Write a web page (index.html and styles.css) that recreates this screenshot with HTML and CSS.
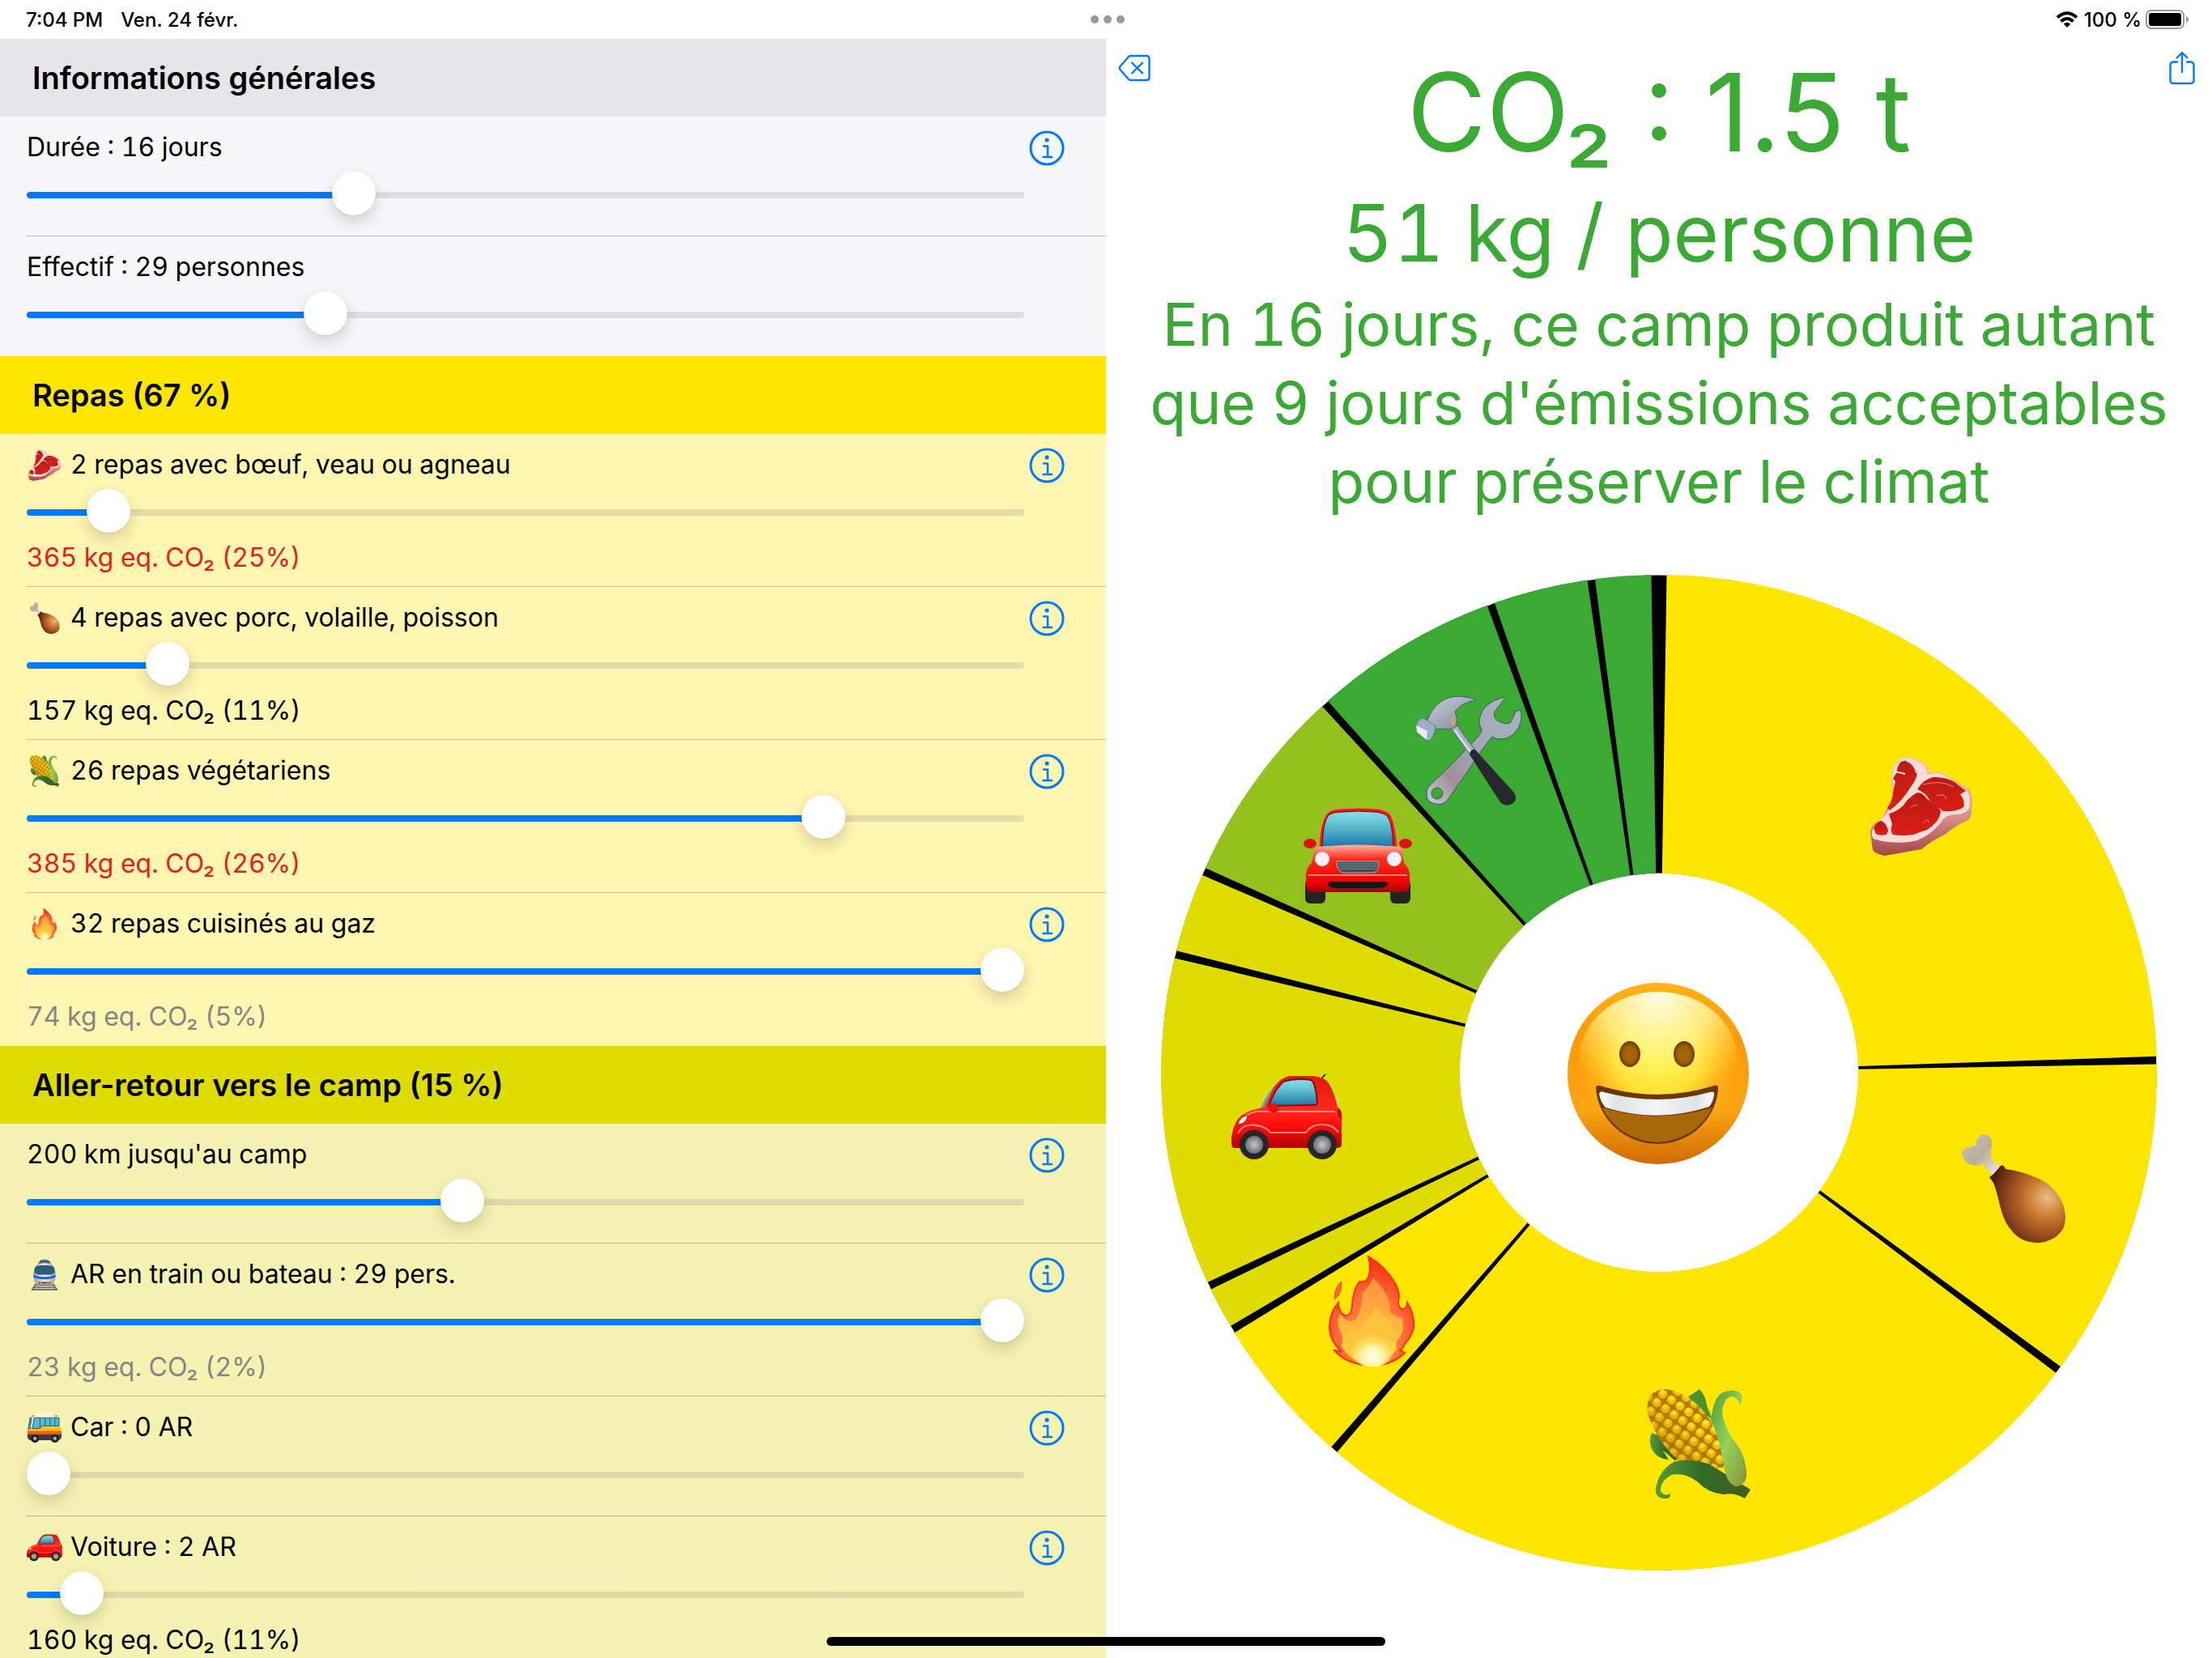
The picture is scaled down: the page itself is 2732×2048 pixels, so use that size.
FILE: index.html
```html
<!DOCTYPE html>
<html lang="fr">
<head>
<meta charset="utf-8">
<meta name="viewport" content="width=device-width, initial-scale=1">
<title>Bilan carbone du camp</title>
<link rel="stylesheet" href="styles.css">
</head>
<body>
<svg class="sprite" aria-hidden="true">
  <defs>
    <linearGradient id="g-bone" x1="0" y1="0" x2="1" y2="1"><stop offset="0" stop-color="#cfc6b8"/><stop offset=".5" stop-color="#b9ad9c"/><stop offset="1" stop-color="#f1ece0"/></linearGradient>
    <radialGradient id="g-leg" cx=".76" cy=".42" r=".75"><stop offset="0" stop-color="#e8bd83"/><stop offset=".35" stop-color="#c9792f"/><stop offset=".7" stop-color="#8f451c"/><stop offset="1" stop-color="#4d1c0c"/></radialGradient>
    <linearGradient id="g-rim" x1="0" y1="0" x2="0" y2="1"><stop offset="0" stop-color="#f6c9c6"/><stop offset=".6" stop-color="#d9908f"/><stop offset="1" stop-color="#a34744"/></linearGradient>
    <linearGradient id="g-red" x1="0" y1="0" x2="0" y2="1"><stop offset="0" stop-color="#b91a10"/><stop offset="1" stop-color="#dc1f16"/></linearGradient>
    <linearGradient id="g-leaf" x1="0" y1="0" x2="1" y2="1"><stop offset="0" stop-color="#4f9a3a"/><stop offset=".5" stop-color="#93d35a"/><stop offset="1" stop-color="#86913a"/></linearGradient>
    <linearGradient id="g-leaf2" x1="0" y1="0" x2="1" y2="0"><stop offset="0" stop-color="#5a9a3c"/><stop offset=".5" stop-color="#2f6b25"/><stop offset="1" stop-color="#475b22"/></linearGradient>
    <pattern id="p-kernel" width="13" height="13" patternUnits="userSpaceOnUse" patternTransform="rotate(35)"><rect width="13" height="13" fill="#b07a00"/><rect x="1" y="1" width="11" height="11" rx="5" fill="#f2bf00"/><circle cx="5" cy="5" r="3" fill="#ffe23c"/></pattern>
    <linearGradient id="g-cobshade" x1="1" y1="0" x2="0" y2="1"><stop offset=".4" stop-color="#a86b00" stop-opacity="0"/><stop offset="1" stop-color="#a86b00" stop-opacity=".6"/></linearGradient>
    <radialGradient id="g-fire" cx=".5" cy=".75" r=".72"><stop offset="0" stop-color="#ffa63a"/><stop offset=".55" stop-color="#ff6a3a"/><stop offset="1" stop-color="#f52e12"/></radialGradient>
    <linearGradient id="g-fire2" x1="0" y1="0" x2="0" y2="1"><stop offset="0" stop-color="#ff9240"/><stop offset=".6" stop-color="#ffb93c"/><stop offset="1" stop-color="#ffdf3a"/></linearGradient>
    <radialGradient id="g-fire3" cx=".5" cy=".75" r=".6"><stop offset="0" stop-color="#fffde8"/><stop offset=".4" stop-color="#fff5a8"/><stop offset="1" stop-color="#ffdd30" stop-opacity="0"/></radialGradient>
    <linearGradient id="g-car" x1="0" y1="0" x2="0" y2="1"><stop offset="0" stop-color="#e4170e"/><stop offset=".45" stop-color="#ff2a1c"/><stop offset=".7" stop-color="#ff0d0d"/><stop offset="1" stop-color="#b30000"/></linearGradient>
    <linearGradient id="g-glass" x1="0" y1="0" x2="0" y2="1"><stop offset="0" stop-color="#86e2e8"/><stop offset=".5" stop-color="#56b4cb"/><stop offset="1" stop-color="#1c76a6"/></linearGradient>
    <radialGradient id="g-hub"><stop offset="0" stop-color="#c6c8cc"/><stop offset="1" stop-color="#6c6e73"/></radialGradient>
    <linearGradient id="g-hood" x1="0" y1="0" x2="0" y2="1"><stop offset="0" stop-color="#ffb5a6"/><stop offset=".3" stop-color="#ff2a1c"/><stop offset=".8" stop-color="#f00000"/><stop offset="1" stop-color="#9e0000"/></linearGradient>
    <linearGradient id="g-steel" x1="0" y1="0" x2="1" y2="1"><stop offset="0" stop-color="#c3cedb"/><stop offset=".5" stop-color="#a3acba"/><stop offset="1" stop-color="#7d7a88"/></linearGradient>
    <linearGradient id="g-steel2" x1="1" y1="0" x2="0" y2="1"><stop offset="0" stop-color="#a9b4c2"/><stop offset=".5" stop-color="#a0a6b4"/><stop offset=".75" stop-color="#a08f99"/><stop offset="1" stop-color="#c2d0dc"/></linearGradient>
    <linearGradient id="g-face" x1="0" y1="0" x2="0" y2="1"><stop offset="0" stop-color="#ffb31a"/><stop offset=".3" stop-color="#ff9a0a"/><stop offset=".7" stop-color="#fca512"/><stop offset="1" stop-color="#cf6a04"/></linearGradient>
    <radialGradient id="g-glow" cx=".5" cy=".42" r=".5"><stop offset="0" stop-color="#fff44a"/><stop offset=".5" stop-color="#ffdc30"/><stop offset="1" stop-color="#ffb81c" stop-opacity="0"/></radialGradient>
    <radialGradient id="g-shine" cx=".5" cy=".04" r=".7"><stop offset="0" stop-color="#fffde6"/><stop offset=".5" stop-color="#fff89a" stop-opacity=".75"/><stop offset="1" stop-color="#fff04a" stop-opacity="0"/></radialGradient>
    <radialGradient id="g-eye"><stop offset="0" stop-color="#a9690a"/><stop offset=".6" stop-color="#a06208"/><stop offset="1" stop-color="#6b3703"/></radialGradient>
    <linearGradient id="g-teeth" x1="0" y1="0" x2="1" y2="0"><stop offset="0" stop-color="#fff"/><stop offset=".15" stop-color="#dfe2e5"/><stop offset=".5" stop-color="#f4f5f7"/><stop offset=".85" stop-color="#dfe2e5"/><stop offset="1" stop-color="#fff"/></linearGradient>
    <linearGradient id="g-train" x1="0" y1="0" x2="1" y2="0"><stop offset="0" stop-color="#9aa1ad"/><stop offset=".5" stop-color="#e9edf2"/><stop offset="1" stop-color="#9aa1ad"/></linearGradient>
  </defs>

  <symbol id="meat" viewBox="0 0 126 122">
    <path fill="url(#g-rim)" d="M27 19Q30 9 34 5 40 0 46 0L58 3 70 11 73 20 84 18Q98 24 107 31L122 40Q127 50 125 62 126 74 121 78 106 84 92 96 78 102 63 114L18 122Q6 120 3 115L0 93Q1 85 7 81 17 75 20 65 27 56 28 42 24 28 27 19Z"/>
    <path fill="#fbdcd8" d="M28 19Q31 9 36 5 41 1 46 2L57 5 67 12 71 22 84 20Q97 25 107 33L120 42Q125 52 122 64 117 70 108 71 92 71 88 80 74 97 58 103 40 108 14 104L4 101Q0 96 3 89 7 82 12 77 20 72 23 64 29 53 30 42 26 28 28 19Z"/>
    <path fill="url(#g-red)" d="M32 20Q34 9 38 6L45 4Q53 8 58 18 58 26 50 37 39 55 24 66L21 63Q28 53 28 44L31 30 28 27Z"/>
    <path fill="none" stroke="#fbdcd8" stroke-width="2" d="M44 4Q56 9 57 20M31 18l12 3"/>
    <path fill="url(#g-red)" d="M23 70Q38 66 45 54 52 47 58 44 65 44 70 52 82 58 87 67 86 80 70 90 60 93 53 96 40 98 28 96 24 92 27 83Z"/>
    <path fill="url(#g-red)" d="M58 40Q66 27 78 25 92 24 104 31L118 42 111 46Q118 56 115 62 108 68 90 67 82 62 74 54Q68 44 58 40Z"/>
    <path fill="none" stroke="#e88" stroke-width="1" d="M65 34q22-6 38 3M82 48q9-4 12 4M50 62q5-4 8-2M65 82q4-6 8-2"/>
    <path fill="url(#g-red)" d="M4 88Q8 79 14 79 20 82 22 91L20 96Q12 98 7 95Z"/>
  </symbol>

  <symbol id="leg" viewBox="0 0 128 134">
    <path fill="url(#g-bone)" d="M0 24Q1 17 8 16L17 14Q17 3 27 0 37 1 37 11 37 21 35 27L47 41 38 51 26 37Q20 40 12 38 2 35 0 24Z"/>
    <path fill="url(#g-leg)" d="M34 53Q39 50 42 46L47 40Q51 36 54 43 75 46 93 54 113 62 123 82 131 99 126 115 119 130 97 134 76 135 64 122 52 110 47 88 43 70 39 60Z"/>
  </symbol>

  <symbol id="corn" viewBox="0 0 128 136">
    <path fill="url(#g-leaf2)" d="M6 54Q1 66 8 77 14 86 27 87L20 76Q26 80 34 88L42 85 22 60Z"/>
    <path fill="#4b9131" d="M51 9Q58 5 65 0 73 8 74 20L81 38Q63 24 51 9Z"/>
    <path fill="url(#p-kernel)" d="M1 30Q-1 9 8 4 20-3 34 2 60 12 77 36 92 64 96 96 62 104 39 88 12 64 1 30Z"/>
    <path fill="url(#g-cobshade)" d="M1 30Q-1 9 8 4 20-3 34 2 60 12 77 36 92 64 96 96 62 104 39 88 12 64 1 30Z"/>
    <path fill="url(#g-leaf2)" d="M29 129Q30 136 21 135 10 134 11 123 15 99 35 89 56 85 78 93L128 124 121 135Q108 127 95 130 75 128 62 114 46 102 30 106 16 114 17 126 22 133 29 129Z"/>
    <path fill="url(#g-leaf)" d="M79 38Q82 12 92 5 104-1 113 3 121 8 115 20 112 8 103 9 94 13 93 30 97 50 108 64 124 84 123 109 119 121 109 120 98 115 95 95 91 62 79 38Z"/>
  </symbol>

  <symbol id="fire" viewBox="0 0 107 137">
    <path fill="#ff6a3a" stroke="#f03a1a" d="M16 32Q7 40 7 54 16 48 16 32Z"/>
    <path fill="url(#g-fire)" stroke="#f53214" stroke-width="2" d="M49 1Q70 13 82 34 89 47 86 57 86 66 92 66 97 65 97 58 106 72 105 88 104 98 94 109 92 115 88 117L94 120Q78 136 51 136 22 134 7 117L15 118Q0 103 1 86 2 70 12 58 12 70 20 74 28 75 29 62 30 42 38 32 45 34 49 27 53 16 49 1Z"/>
    <path fill="url(#g-fire2)" d="M55 28Q76 46 76 70 86 78 90 76 96 92 84 106L84 116Q68 134 51 135 28 132 16 112 20 102 12 88 10 78 14 72 26 88 36 76 42 60 42 46 48 40 55 28Z"/>
    <path fill="#ffc23c" d="M60 64Q72 82 78 80 84 100 74 116 62 134 52 135 32 130 24 112 20 98 26 92 40 94 46 80Z"/>
    <ellipse cx="54" cy="112" rx="28" ry="26" fill="url(#g-fire3)"/>
  </symbol>

  <symbol id="car" viewBox="0 0 137 107">
    <path stroke="#333" stroke-width="2" fill="none" d="M111 9Q112 4 116 1"/>
    <path fill="#4fa9bf" d="M36 43Q44 24 56 12L60 20 46 43ZM120 12Q129 25 131 42L122 30Z"/>
    <path fill="url(#g-car)" d="M0 78Q3 60 12 52 24 44 40 42L52 18Q60 5 72 3L100 3Q116 5 120 12 127 25 131 42 138 44 136 60V88Q136 92 130 92H4Q0 92 0 86Z"/>
    <path fill="url(#g-glass)" stroke="#8c0b08" stroke-width="2" d="M46 40Q53 20 64 10 80 5 98 8 104 11 106 36 106 39 102 39Z"/>
    <path fill="none" stroke="#ff8d80" stroke-width="2" d="M14 56Q22 45 42 47H128M8 74q6-13 22-10 14 2 18 9h44q6-10 20-10t20 10"/>
    <path fill="#fff" stroke="#a33" d="M8 63Q10 53 20 52 18 62 8 63Z"/>
    <rect x="46" y="37" width="12" height="11" rx="4" fill="#e3140d"/>
    <path fill="#a50c0c" d="M131 42q6 4 4 14-4-2-4-14Z"/>
    <circle cx="28" cy="88" r="18" fill="#262628"/><circle cx="28" cy="88" r="11" fill="url(#g-hub)"/>
    <circle cx="112" cy="88" r="18" fill="#262628"/><circle cx="112" cy="88" r="11" fill="url(#g-hub)"/>
  </symbol>

  <symbol id="carfront" viewBox="0 0 134 118">
    <rect x="2" y="88" width="25" height="30" rx="6" fill="#232325"/>
    <rect x="107" y="88" width="25" height="30" rx="6" fill="#232325"/>
    <path fill="#ee1c10" stroke="#ff7e68" d="M19 50Q20 20 28 8 34 1 46 1 67-1 90 1 102 2 108 9 114 22 116 50Z"/>
    <path fill="url(#g-glass)" stroke="#5b0b08" d="M23 48Q24 16 31 9 36 5 48 5 67 3 88 5 100 6 104 11 110 20 111 48Z"/>
    <ellipse cx="8" cy="44" rx="8" ry="6" fill="#e01010"/><ellipse cx="126" cy="44" rx="8" ry="6" fill="#e01010"/>
    <path fill="url(#g-hood)" d="M14 50Q18 47 30 47 67 44 105 47 118 47 121 50L124 68Q131 74 131 84V98Q130 104 122 104H12Q4 104 3 98V84Q3 74 10 68Z"/>
    <path fill="none" stroke="#ff8474" stroke-width="2" d="M6 83H128"/>
    <circle cx="23" cy="63" r="9" fill="#f2f2f4" stroke="#c99"/><circle cx="112" cy="63" r="9" fill="#f2f2f4" stroke="#c99"/>
    <path fill="#40525d" stroke="#a9b1b8" d="M41 66H93Q93 80 86 80H48Q41 78 41 66Z"/>
    <path stroke="#82929c" fill="none" d="M43 69H91M43 72H91M45 75H89"/>
    <path fill="#151517" d="M34 91H100Q106 91 103 95 100 99 94 99H40Q34 99 31 95 29 91 34 91Z"/>
  </symbol>

  <symbol id="tools" viewBox="0 0 132 136">
    <path fill="url(#g-steel2)" stroke="#4b4f58" fill-rule="evenodd" d="M107 3Q112 1 109 6L98 20Q95 29 105 33 112 36 117 34 121 28 124 20 130 16 131 22 132 35 124 45 116 54 105 54 99 54 95 51 82 66 64 95L39 130Q33 136 25 134 14 132 14 123 13 117 17 112L42 88 74 55Q82 47 82 42 77 34 80 27 82 17 89 12 97 5 107 3ZM20 121A7 7 0 0 0 34 121 7 7 0 0 0 20 121Z"/>
    <path fill="#aab2c1" stroke="#5a5f6b" d="M44 41L52 37Q61 52 73 66L67 73Q57 58 44 41Z"/>
    <path fill="none" stroke="#dfe7ee" stroke-width="2" d="M49 43Q58 57 68 69"/>
    <path fill="#26292c" d="M67 73Q69 65 74 67L122 120Q127 128 121 133 112 139 105 132Z"/>
    <path fill="url(#g-steel)" stroke="#4f5866" d="M17 26Q22 14 34 6 48-1 62 2 72 3 75 6 58 8 49 20 54 32 50 38 45 44 34 41L27 42 14 32Z"/>
    <path fill="#c9a084" d="M45 22Q52 30 48 38L43 35Q46 29 45 22Z"/>
    <path fill="#9fb0c6" stroke="#66758a" d="M1 37Q4 28 10 28L25 38Q23 54 16 56L2 45Z"/>
    <path fill="#e6eef6" d="M1 37L15 44 14 55 2 45Z"/>
  </symbol>

  <symbol id="smile" viewBox="0 0 224 224">
    <circle cx="112" cy="112" r="112" fill="url(#g-face)"/>
    <ellipse cx="112" cy="110" rx="102" ry="100" fill="url(#g-glow)"/>
    <ellipse cx="112" cy="96" rx="98" ry="85" fill="url(#g-shine)"/>
    <ellipse cx="77" cy="88" rx="13" ry="16" fill="url(#g-eye)"/><ellipse cx="144" cy="88" rx="13" ry="16" fill="url(#g-eye)"/>
    <path fill="#6b3703" d="M35 131Q35 126 40 127 111 149 181 127 187 125 186 133 183 163 157 184 136 199 111 199 86 199 65 184 38 163 35 131Z"/>
    <path fill="#a56708" d="M43 154Q111 175 179 154 170 172 153 184 134 196 111 197 88 196 69 184 51 172 43 154Z"/>
    <path fill="url(#g-teeth)" d="M39 137Q40 133 45 135 111 153 176 135 182 133 181 138 180 147 175 153 111 174 47 154 41 148 39 137Z"/>
  </symbol>

  <symbol id="train" viewBox="0 0 34 41">
    <path stroke="#77726f" stroke-width="2" fill="none" d="M6 32L1 40M28 32L33 40M4 34H30M2 37H32M0 40H34"/>
    <path fill="#2f5f80" stroke="#9aa1ad" d="M9 6Q10 1 17 1T25 6Z"/>
    <path fill="url(#g-train)" stroke="#8f97a4" d="M3 20Q3 5 17 5T31 20Q31 32 24 33H10Q3 32 3 20Z"/>
    <path fill="#29607f" stroke="#1d3c52" d="M5 12Q6 9 17 9T29 12V18Q28 20 17 20T5 18Z"/>
    <path fill="none" stroke="#1660e0" stroke-width="3" d="M3 22Q7 25 17 25T31 22"/>
    <path stroke="#d22" stroke-width="2" d="M9 31H12M22 31H25"/><path stroke="#444" stroke-width="2" d="M13 31H21"/>
  </symbol>

  <symbol id="bus" viewBox="0 0 41 38">
    <path fill="#fff6d8" d="M10 2Q11 1 14 1H28Q30 1 31 3H38Q39 4 40 18H0Q1 6 3 4 4 3 9 3Z"/>
    <path fill="#ffc400" d="M7 18H40V24H0V20Z"/>
    <path fill="#ff5f1a" d="M0 23H41V28H0Z"/>
    <path fill="#3c3c40" d="M0 27H41V30Q40 34 37 34H3Q0 33 0 30Z"/>
    <path fill="#58b7cf" stroke="#24617a" d="M3 7H5L3 20H1ZM8 7H38V17H18L14 20H6Z"/>
    <path stroke="#24617a" d="M15 7V19M21 7V17M27 7V17M33 7V17"/>
    <path stroke="#ff8a1a" stroke-width="2" d="M5 5H8M33 5H36"/>
    <circle cx="9" cy="32" r="5" fill="#26262a"/><circle cx="9" cy="32" r="2" fill="#bbb"/>
    <circle cx="33" cy="32" r="5" fill="#26262a"/><circle cx="33" cy="32" r="2" fill="#bbb"/>
  </symbol>

  <symbol id="info" viewBox="0 0 44 44">
    <circle cx="22" cy="22" r="20" fill="none" stroke="currentColor" stroke-width="3"/>
    <circle cx="22" cy="12" r="2.6" fill="currentColor"/>
    <path d="M18 19.500H23V33M17.500 33H28" fill="none" stroke="currentColor" stroke-width="2.600" stroke-linecap="round" stroke-linejoin="round"/>
  </symbol>
</svg>

<header class="status">
  <div class="status-left"><span>7:04 PM</span><span>Ven. 24 févr.</span></div>
  <div class="dots" aria-hidden="true"><i></i><i></i><i></i></div>
  <div class="status-right">
    <svg class="wifi" viewBox="0 0 28 20" aria-hidden="true"><g fill="none" stroke="#000" stroke-width="4"><path d="M2 7.500Q14-3 26 7.500"/><path d="M6.500 12.500Q14 5.500 21.500 12.500"/></g><path d="M9.800 15.500Q14 12 18.200 15.500L14 20Z"/></svg>
    <span>100 %</span>
    <svg class="battery" viewBox="0 0 54 24" aria-hidden="true"><rect x="1" y="1" width="46" height="22" rx="6" fill="none" stroke="#999" stroke-width="2"/><rect x="4" y="4" width="40" height="16" rx="3"/><path d="M50 8Q53 9 53 12T50 16Z" fill="#999"/></svg>
  </div>
</header>

<main class="panes">
  <div class="form">
    <section class="group general">
      <h2>Informations générales</h2>
      <div class="row">
        <div class="field">
          <label for="duree">Durée : 16 jours</label>
          <input type="range" id="duree" min="0" max="50" value="16" style="--part:.32">
        </div>
        <button class="info" type="button" aria-label="Informations sur la durée"><svg><use href="#info"/></svg></button>
      </div>
      <div class="row">
        <div class="field">
          <label for="effectif">Effectif : 29 personnes</label>
          <input type="range" id="effectif" min="0" max="100" value="29" style="--part:.29">
        </div>
      </div>
    </section>

    <section class="group meals">
      <h2>Repas (67 %)</h2>
      <div class="row">
        <div class="field">
          <label for="boeuf"><svg class="emoji"><use href="#meat"/></svg>2 repas avec bœuf, veau ou agneau</label>
          <input type="range" id="boeuf" min="0" max="32" value="2" style="--part:.0625">
          <output class="high" for="boeuf">365 kg eq. CO₂ (25%)</output>
        </div>
        <button class="info" type="button" aria-label="Informations sur le bœuf"><svg><use href="#info"/></svg></button>
      </div>
      <div class="row">
        <div class="field">
          <label for="porc"><svg class="emoji"><use href="#leg"/></svg>4 repas avec porc, volaille, poisson</label>
          <input type="range" id="porc" min="0" max="32" value="4" style="--part:.125">
          <output for="porc">157 kg eq. CO₂ (11%)</output>
        </div>
        <button class="info" type="button" aria-label="Informations sur le porc"><svg><use href="#info"/></svg></button>
      </div>
      <div class="row">
        <div class="field">
          <label for="vege"><svg class="emoji"><use href="#corn"/></svg>26 repas végétariens</label>
          <input type="range" id="vege" min="0" max="32" value="26" style="--part:.8125">
          <output class="high" for="vege">385 kg eq. CO₂ (26%)</output>
        </div>
        <button class="info" type="button" aria-label="Informations sur les repas végétariens"><svg><use href="#info"/></svg></button>
      </div>
      <div class="row">
        <div class="field">
          <label for="gaz"><svg class="emoji"><use href="#fire"/></svg>32 repas cuisinés au gaz</label>
          <input type="range" id="gaz" min="0" max="32" value="32" style="--part:1">
          <output class="low" for="gaz">74 kg eq. CO₂ (5%)</output>
        </div>
        <button class="info" type="button" aria-label="Informations sur le gaz"><svg><use href="#info"/></svg></button>
      </div>
    </section>

    <section class="group travel">
      <h2>Aller-retour vers le camp (15 %)</h2>
      <div class="row">
        <div class="field">
          <label for="distance">200 km jusqu'au camp</label>
          <input type="range" id="distance" min="0" max="461" value="200" style="--part:.434">
        </div>
        <button class="info" type="button" aria-label="Informations sur la distance"><svg><use href="#info"/></svg></button>
      </div>
      <div class="row">
        <div class="field">
          <label for="train-ar"><svg class="emoji"><use href="#train"/></svg>AR en train ou bateau : 29 pers.</label>
          <input type="range" id="train-ar" min="0" max="29" value="29" style="--part:1">
          <output class="low" for="train-ar">23 kg eq. CO₂ (2%)</output>
        </div>
        <button class="info" type="button" aria-label="Informations sur le train"><svg><use href="#info"/></svg></button>
      </div>
      <div class="row">
        <div class="field">
          <label for="car-ar"><svg class="emoji"><use href="#bus"/></svg>Car : 0 AR</label>
          <input type="range" id="car-ar" min="0" max="29" value="0" style="--part:0">
        </div>
        <button class="info" type="button" aria-label="Informations sur le car"><svg><use href="#info"/></svg></button>
      </div>
      <div class="row">
        <div class="field">
          <label for="voiture"><svg class="emoji"><use href="#car"/></svg>Voiture : 2 AR</label>
          <input type="range" id="voiture" min="0" max="58" value="2" style="--part:.0345">
          <output for="voiture">160 kg eq. CO₂ (11%)</output>
        </div>
        <button class="info" type="button" aria-label="Informations sur la voiture"><svg><use href="#info"/></svg></button>
      </div>
    </section>
  </div>

  <div class="result">
    <div class="tools">
      <button type="button" aria-label="Effacer"><svg width="40" height="34" viewBox="0 0 40 34" fill="none" stroke="currentColor" stroke-width="2.400" stroke-linecap="round" stroke-linejoin="round"><path d="M15.500 2H35Q38.500 2 38.500 5.500V28.500Q38.500 32 35 32H15.500Q14 32 13 31L2.500 19Q1 17 2.500 15L13 3Q14 2 15.500 2Z"/><path d="M17 10.500L30 23.500M30 10.500L17 23.500"/></svg></button>
      <button type="button" aria-label="Partager"><svg width="32" height="42" viewBox="0 0 32 42" fill="none" stroke="currentColor" stroke-width="2.400" stroke-linecap="round" stroke-linejoin="round"><path d="M10 13.500H5.500Q1.500 13.500 1.500 17.500V36Q1.500 40 5.500 40H26.500Q30.500 40 30.500 36V17.500Q30.500 13.500 26.500 13.500H22"/><path d="M16 26V2M9.500 8.500L16 2L22.500 8.500"/></svg></button>
    </div>
    <h1>CO₂ : 1.5 t</h1>
    <p class="each">51 kg / personne</p>
    <p class="compare">En 16 jours, ce camp produit autant que 9 jours d'émissions acceptables pour préserver le climat</p>
    <svg class="chart" viewBox="0 0 1230 1230" role="img" aria-label="Répartition des émissions">
      <g fill="none" stroke-width="369" transform="rotate(-90 615 615)">
        <circle cx="615" cy="615" r="430.5" stroke="#000" stroke-width="368"/>
        <g stroke="#ffe600">
          <circle cx="615" cy="615" r="430.5" pathLength="3600" stroke-dasharray="872 2728" stroke-dashoffset="-9"/>
          <circle cx="615" cy="615" r="430.5" pathLength="3600" stroke-dasharray="372 3228" stroke-dashoffset="-890"/>
          <circle cx="615" cy="615" r="430.5" pathLength="3600" stroke-dasharray="932 2668" stroke-dashoffset="-1271"/>
          <circle cx="615" cy="615" r="430.5" pathLength="3600" stroke-dasharray="173 3427" stroke-dashoffset="-2212"/>
        </g>
        <g stroke="#dedc00">
          <circle cx="615" cy="615" r="430.5" pathLength="3600" stroke-dasharray="48 3552" stroke-dashoffset="-2394"/>
          <circle cx="615" cy="615" r="430.5" pathLength="3600" stroke-dasharray="382 3218" stroke-dashoffset="-2451"/>
          <circle cx="615" cy="615" r="430.5" pathLength="3600" stroke-dasharray="92 3508" stroke-dashoffset="-2842"/>
        </g>
        <circle cx="615" cy="615" r="430.5" stroke="#95c11f" pathLength="3600" stroke-dasharray="231 3369" stroke-dashoffset="-2943"/>
        <g stroke="#3aaa35">
          <circle cx="615" cy="615" r="430.5" pathLength="3600" stroke-dasharray="215 3385" stroke-dashoffset="-3183"/>
          <circle cx="615" cy="615" r="430.5" pathLength="3600" stroke-dasharray="110 3490" stroke-dashoffset="-3407"/>
          <circle cx="615" cy="615" r="430.5" pathLength="3600" stroke-dasharray="65 3535" stroke-dashoffset="-3526"/>
        </g>
      </g>
      <use href="#meat" x="876" y="225" width="126" height="122"/>
      <use href="#leg" x="989" y="691" width="128" height="134"/>
      <use href="#corn" x="600" y="1006" width="128" height="136"/>
      <use href="#fire" x="207" y="841" width="107" height="137"/>
      <use href="#car" x="87" y="616" width="137" height="107"/>
      <use href="#carfront" x="176" y="288" width="134" height="118"/>
      <use href="#tools" x="314" y="149" width="132" height="136"/>
      <use href="#smile" x="502" y="504" width="224" height="224"/>
    </svg>
  </div>
</main>
<div class="home-bar"></div>
</body>
</html>
```
FILE: styles.css
```css
* { box-sizing: border-box; }

body {
  margin: 0;
  height: 100vh;
  display: flex;
  flex-direction: column;
  overflow: hidden;
  background: #fff;
  color: #000;
  font-family: Inter, "Liberation Sans", sans-serif;
}

button {
  padding: 0;
  border: 0;
  background: none;
  color: #007aff;
}

button svg { display: block; }

.sprite {
  position: absolute;
  width: 0;
  height: 0;
}

/* Status bar */
.status {
  flex: none;
  height: 48px;
  padding: 0 28px 0 32px;
  display: grid;
  grid-template-columns: 1fr auto 1fr;
  align-items: center;
  font-size: 24px;
  font-weight: 500;
}

.status-left { display: flex; gap: 22px; }

.dots { display: flex; gap: 6px; }

.dots i {
  width: 10px;
  height: 10px;
  border-radius: 50%;
  background: #999;
}

.status-right {
  display: flex;
  align-items: center;
  justify-content: flex-end;
}

.wifi { width: 28px; height: 20px; margin-right: 7px; }
.battery { width: 54px; height: 24px; margin-left: 5px; }

/* Two panes */
.panes {
  flex: 1;
  min-height: 0;
  display: grid;
  grid-template-columns: 1fr 1fr;
}

.form { overflow: hidden; }

.general { background: #f7f7f9; }
.general h2 { background: #e5e5ea; }
.meals { background: #fff6b2; }
.meals h2 { background: #ffe600; }
.travel { background: #f5f3b2; }
.travel h2 { background: #dedc00; }

.group h2 {
  margin: 0;
  padding: 0 40px;
  font-size: 38px;
  font-weight: 600;
  line-height: 96px;
}

.row {
  display: flex;
  align-items: flex-start;
  gap: 6px;
  margin-left: 32px;
  padding: 17px 51px 15px 1px;
  border-bottom: 1px solid rgba(60, 60, 67, .29);
}

.row:last-child { border-bottom-color: transparent; }

.field {
  flex: 1;
  display: flex;
  flex-direction: column;
  font-size: 32px;
  font-variant-numeric: tabular-nums;
}

.row:not(:has(.info)) { padding-right: 101px; }

.field label {
  display: flex;
  align-items: center;
  gap: 10px;
  height: 42px;
  line-height: 42px;
}

.field output { line-height: 41px; }

.high { color: #e6201a; }
.low { color: #858585; }

.emoji { width: 44px; height: 39px; }

.info svg { width: 44px; height: 44px; }

input[type="range"] {
  -webkit-appearance: none;
  appearance: none;
  width: 100%;
  height: 54px;
  margin: 11px 0 8px;
  background: none;
}

input[type="range"]::-webkit-slider-runnable-track {
  height: 8px;
  border-radius: 4px;
  background: linear-gradient(90deg, #007aff calc(27px + (100% - 54px) * var(--part)), rgba(120, 120, 128, .2) 0);
}

input[type="range"]::-webkit-slider-thumb {
  -webkit-appearance: none;
  width: 54px;
  height: 54px;
  margin-top: -25px;
  border-radius: 50%;
  background: #fff;
  box-shadow: 0 1px 2px rgba(0, 0, 0, .06), 0 8px 20px rgba(0, 0, 0, .16);
}

/* Result pane */
.result {
  position: relative;
  display: flex;
  flex-direction: column;
  align-items: center;
  padding-top: 4px;
  color: #3aaa35;
  text-align: center;
}

.tools {
  position: absolute;
  top: 15px;
  left: 15px;
  right: 21px;
  display: flex;
  align-items: center;
  justify-content: space-between;
}

.result h1,
.result p { margin: 0; font-weight: 400; }

.result h1 { font-size: 134px; line-height: 172px; }

.result p { font-variant-numeric: tabular-nums; }

.result .each { font-size: 97px; line-height: 128px; }

.compare {
  padding: 0 48px;
  font-size: 73px;
  line-height: 97px;
}

.chart {
  width: calc(100% - 136px);
  margin-top: 67px;
}

.home-bar {
  position: absolute;
  bottom: 15px;
  left: 50%;
  width: 690px;
  height: 11px;
  margin-left: -345px;
  border-radius: 6px;
  background: #000;
}
```
